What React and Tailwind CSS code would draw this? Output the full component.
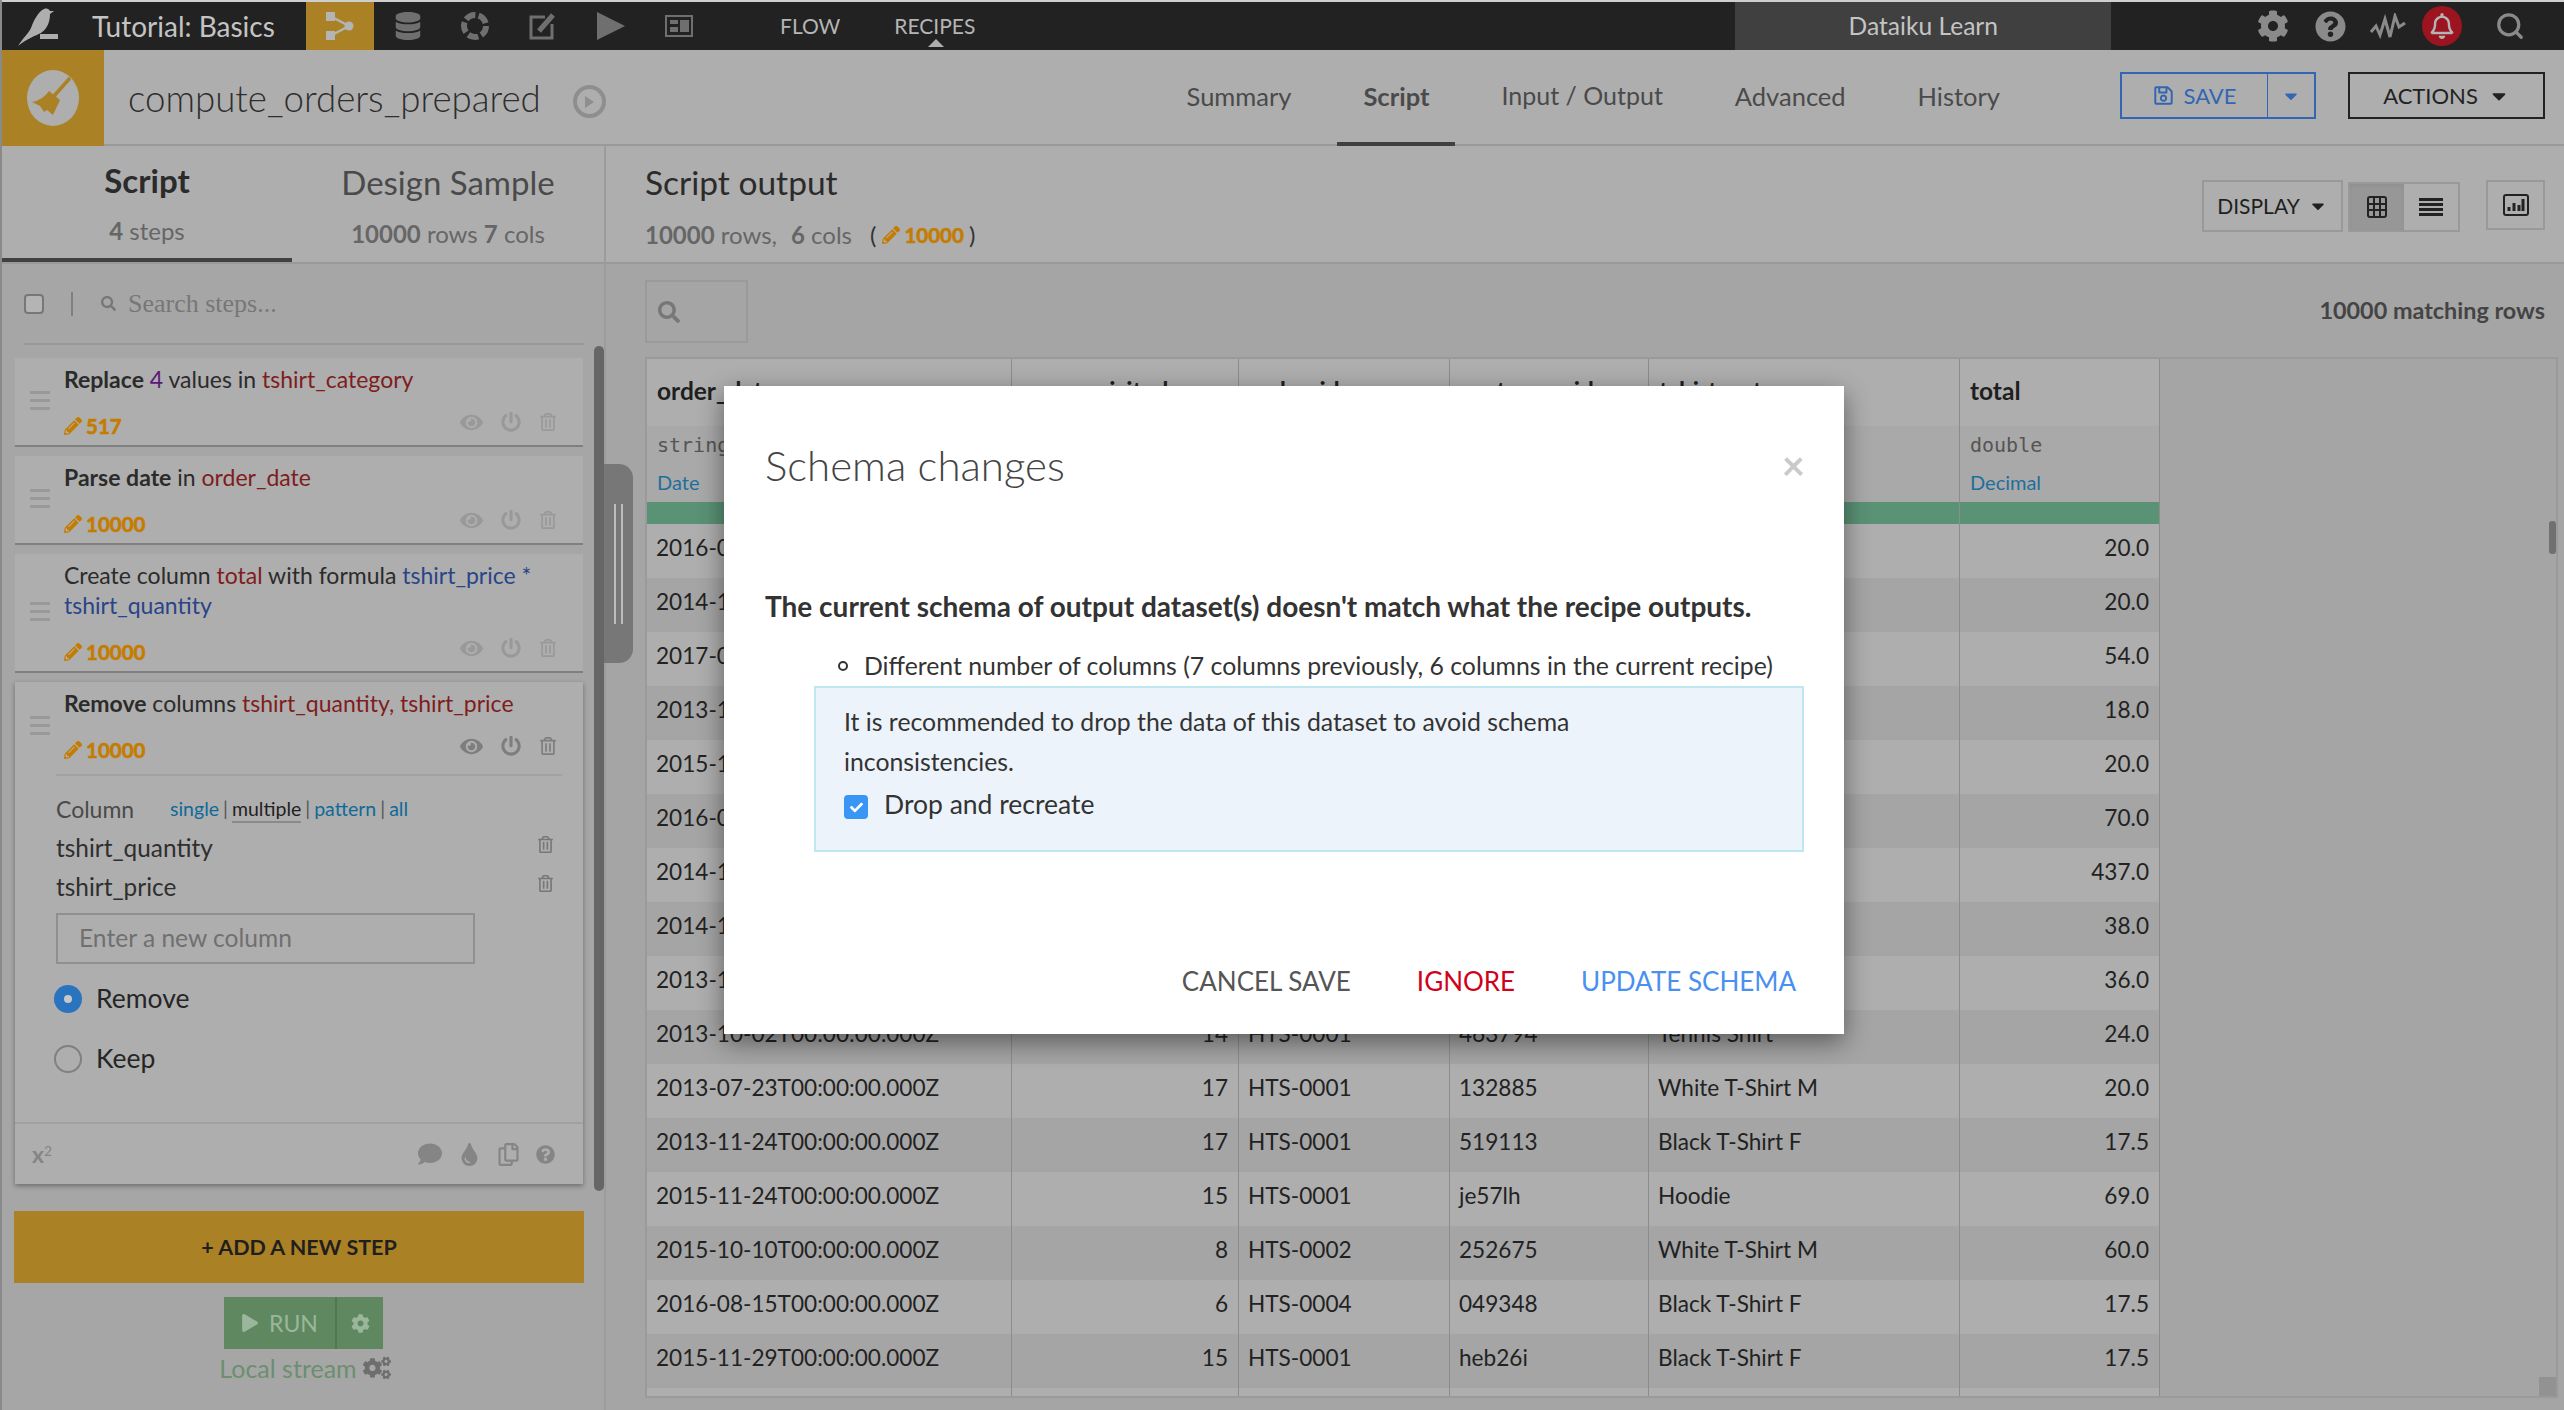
import React from "react";
import {
    FaCog, FaCogs, FaQuestionCircle, FaRegBell, FaSearch, FaEye, FaPowerOff, FaRegTrashAlt, FaPencilAlt,
    FaComment, FaTint, FaRegCopy, FaPlay, FaCaretDown, FaRegSave, FaDatabase, FaCheck,
} from "react-icons/fa";
import { Search } from "lucide-react";

const steps = [
    { id: 1, count: "517", lines: (<><b className="font-bold">Replace</b> <span className="text-[#5a1a78]">4</span> values in <span className="text-[#7f1d1d]">tshirt_category</span></>) },
    { id: 2, count: "10000", lines: (<><b className="font-bold">Parse date</b> in <span className="text-[#7f1d1d]">order_date</span></>) },
    { id: 3, count: "10000", lines: (<>Create column <span className="text-[#7f1d1d]">total</span> with formula <span className="text-[#2a4488]">tshirt_price</span> <span className="text-[#2a4488]">*</span><br /><span className="text-[#2a4488]">tshirt_quantity</span></>) },
];

const rows = [
    ["2016-03-12T00:00:00.000Z", 12, "HTS-0001", "382910", "White T-Shirt M", "20.0"],
    ["2014-11-02T00:00:00.000Z", 9, "HTS-0001", "720114", "Black T-Shirt M", "20.0"],
    ["2017-01-20T00:00:00.000Z", 4, "HTS-0003", "118273", "Wh Tee F", "54.0"],
    ["2013-12-01T00:00:00.000Z", 11, "HTS-0002", "440921", "Black T-Shirt F", "18.0"],
    ["2015-10-19T00:00:00.000Z", 7, "HTS-0001", "661204", "White T-Shirt M", "20.0"],
    ["2016-05-08T00:00:00.000Z", 3, "HTS-0001", "903348", "Hoodie", "70.0"],
    ["2014-10-27T00:00:00.000Z", 21, "HTS-0005", "257716", "Hoodie", "437.0"],
    ["2014-12-14T00:00:00.000Z", 6, "HTS-0002", "835190", "Tennis Shirt", "38.0"],
    ["2013-11-30T00:00:00.000Z", 10, "HTS-0002", "394025", "Black T-Shirt F", "36.0"],
    ["2013-10-02T00:00:00.000Z", 14, "HTS-0001", "463794", "Tennis Shirt", "24.0"],
    ["2013-07-23T00:00:00.000Z", 17, "HTS-0001", "132885", "White T-Shirt M", "20.0"],
    ["2013-11-24T00:00:00.000Z", 17, "HTS-0001", "519113", "Black T-Shirt F", "17.5"],
    ["2015-11-24T00:00:00.000Z", 15, "HTS-0001", "je57lh", "Hoodie", "69.0"],
    ["2015-10-10T00:00:00.000Z", 8, "HTS-0002", "252675", "White T-Shirt M", "60.0"],
    ["2016-08-15T00:00:00.000Z", 6, "HTS-0004", "049348", "Black T-Shirt F", "17.5"],
    ["2015-11-29T00:00:00.000Z", 15, "HTS-0001", "heb26i", "Black T-Shirt F", "17.5"],
];

const Bird = () => (
    <svg width="42" height="40" viewBox="0 0 42 40" fill="#aeaeae">
        <path d="M0 38 C5 30 10 26 13 20 C16 12 20 4 26 1 C29 0 31 1 32 3 L36 3 L32 6 C32 14 29 21 23 25 C17 28 10 30 0 38Z" />
        <rect x="22" y="26" width="18" height="5" />
    </svg>
);

const FlowIcon = () => (
    <svg width="30" height="30" viewBox="0 0 30 30" fill="#b4b4b4">
        <rect x="1" y="1" width="9" height="9" />
        <rect x="1" y="20" width="9" height="9" />
        <circle cx="24" cy="15" r="4.5" />
        <path d="M6 5.5 L24 15 L6 24.5" fill="none" stroke="#b4b4b4" strokeWidth="2.5" />
    </svg>
);

const RingIcon = () => (
    <svg width="30" height="30" viewBox="0 0 30 30" fill="none" stroke="#6f6f6f" strokeWidth="6">
        <circle cx="15" cy="15" r="11" strokeDasharray="10.5 3.3" />
    </svg>
);

const EditIcon = () => (
    <svg width="30" height="30" viewBox="0 0 30 30" fill="none" stroke="#6f6f6f" strokeWidth="3">
        <path d="M17 6 H3 V27 H24 V13" />
        <path d="M11 20 L25 4" strokeWidth="5" />
    </svg>
);

const PlayIcon = () => (
    <svg width="28" height="28" viewBox="0 0 28 28" fill="#6f6f6f"><path d="M0 0 L28 14 L0 28Z" /></svg>
);

const DashIcon = () => (
    <svg width="28" height="22" viewBox="0 0 28 22" fill="#6f6f6f">
        <path fillRule="evenodd" d="M0 0 H28 V22 H0Z M2 2 V20 H26 V2Z" />
        <rect x="5" y="5" width="8" height="4" />
        <rect x="5" y="12" width="8" height="5" />
        <rect x="15" y="5" width="9" height="12" />
    </svg>
);

const Broom = () => (
    <svg width="52" height="56" viewBox="0 0 52 56">
        <ellipse cx="26" cy="28" rx="26" ry="28" fill="#aeaeae" />
        <path d="M43 8 L27 26" stroke="#ab8125" strokeWidth="3.5" />
        <path d="M22 21 L33 30 L26 45 L20 40 L17 42 L13 36 L5 32 Q16 30 22 21Z" fill="#ab8125" />
    </svg>
);

const Activity = () => (
    <svg width="36" height="26" viewBox="0 0 36 26" fill="none" stroke="#8a8a8a" strokeWidth="3">
        <path d="M1 19 L6 13 L10 22 L15 6 L20 24 L25 3 L29 14 L35 10" />
    </svg>
);

const Handle = () => (
    <div className="flex flex-col gap-[5px] w-[20px]">
        <div className="h-[3px] bg-[#999999]" />
        <div className="h-[3px] bg-[#999999]" />
        <div className="h-[3px] bg-[#999999]" />
    </div>
);

const Count = ({ value }) => (
    <span className="flex items-center gap-[4px] text-[#c47c00] font-bold text-[20.5px] [-webkit-text-stroke:0.6px_#c47c00]">
        <FaPencilAlt className="text-[18px]" />
        {value}
    </span>
);

const StepTop = ({ step, active, children, height }) => (
    <div className={"flex " + height}>
        <div className="w-[49px] shrink-0 flex items-center justify-center pl-[1px] pb-[2px]">
            <Handle />
        </div>
        <div className="flex-1 pt-[6px] pr-[20px]">
            <div className="text-[23px] leading-[30px] text-[#2b2b2b] whitespace-nowrap">{children}</div>
            <div className="mt-[17px] h-[30px] flex items-center justify-between pr-[6px]">
                <Count value={step.count} />
                <div className={"flex items-center gap-[18px] mb-[8px] " + (active ? "text-[#7e7e7e]" : "text-[#999999]")}>
                    <FaEye className="text-[23px]" />
                    <FaPowerOff className="text-[20px]" />
                    <FaRegTrashAlt className="text-[18px]" />
                </div>
            </div>
        </div>
    </div>
);

const StepCard = ({ step, tall }) => (
    <div className="bg-[#aeaeae] border-b-2 border-[#808080]">
        <StepTop step={step} height={tall ? "h-[117px]" : "h-[87px]"}>{step.lines}</StepTop>
    </div>
);

const ModeLink = ({ children, active }) => (
    <span className={active ? "text-[#1f1f1f] border-b-2 border-[#8a8a8a] leading-[25px]" : "text-[#0f6a99]"}>{children}</span>
);

const Sidebar = () => (
    <aside className="w-[604px] shrink-0 border-r-2 border-[#9c9c9c] bg-[#a6a6a6] relative flex flex-col">
        <div className="h-[118px] bg-[#aeaeae] border-b-2 border-[#999999] flex shrink-0">
            <div className="w-[290px] border-b-[4px] border-[#404040] flex flex-col items-center pt-[16px]">
                <span className="text-[33px] leading-[36px] font-bold text-[#2b2b2b]">Script</span>
                <span className="text-[24px] mt-[16px] leading-[34px] text-[#666666]"><b>4</b> steps</span>
            </div>
            <div className="flex-1 flex flex-col items-center pt-[18px]">
                <span className="text-[33px] leading-[36px] text-[#4a4a4a]">Design Sample</span>
                <span className="text-[24px] mt-[17px] leading-[34px] text-[#666666]"><b>10000</b> rows <b>7</b> cols</span>
            </div>
        </div>
        <div className="h-[81px] ml-[22px] w-[560px] border-b-2 border-[#999999] flex items-center shrink-0">
            <span className="w-[20px] h-[20px] rounded-[4px] border-2 border-[#777777] bg-[#b4b4b4]" />
            <span className="w-[2px] h-[24px] bg-[#808080] ml-[27px]" />
            <FaSearch className="text-[15px] text-[#777777] ml-[28px]" />
            <span className="ml-[12px] text-[26px] text-[#777777] [font-family:'Liberation_Serif',serif]">Search steps...</span>
        </div>
        <div className="ml-[13px] w-[568px] mt-[13px] flex flex-col gap-[9px]">
            {steps.map((s) => <StepCard key={s.id} step={s} tall={s.id === 3} />)}
            <div className="bg-[#aeaeae] h-[502px] shadow-[0_2px_5px_rgba(0,0,0,0.35)] flex flex-col">
                <StepTop step={{ count: "10000" }} active height="h-[89px]">
                    <b className="font-bold">Remove</b> columns <span className="text-[#7f1d1d]">tshirt_quantity, tshirt_price</span>
                </StepTop>
                <div className="ml-[41px] w-[506px] border-t-2 border-[#a2a2a2] mt-[3px] flex-1 flex flex-col">
                    <div className="h-[40px] mt-[13px] flex items-center shrink-0">
                        <span className="w-[114px] text-[23px] text-[#4a4a4a]">Column</span>
                        <div className="flex items-center gap-[4px] text-[19.5px]">
                            <ModeLink>single</ModeLink><span className="text-[#555555]">|</span>
                            <ModeLink active>multiple</ModeLink><span className="text-[#555555]">|</span>
                            <ModeLink>pattern</ModeLink><span className="text-[#555555]">|</span>
                            <ModeLink>all</ModeLink>
                        </div>
                    </div>
                    {["tshirt_quantity", "tshirt_price"].map((c) => (
                        <div key={c} className="h-[39px] flex items-center justify-between text-[24.4px] text-[#2f2f2f] pr-[8px] shrink-0">
                            {c}
                            <FaRegTrashAlt className="text-[17px] text-[#777777] mb-[8px]" />
                        </div>
                    ))}
                    <div className="w-[419px] h-[51px] mt-[6px] border-2 border-[#909090] flex items-center pl-[21px] text-[24.6px] text-[#707070] shrink-0">Enter a new column</div>
                    <div className="h-[60px] mt-[5px] flex items-center -ml-[2px] shrink-0">
                        <span className="w-[28px] h-[28px] rounded-full bg-[#2a73bf] flex items-center justify-center">
                            <span className="w-[8px] h-[8px] rounded-full bg-[#c8c8c8]" />
                        </span>
                        <span className="ml-[14px] text-[26.5px] text-[#262626]">Remove</span>
                    </div>
                    <div className="h-[60px] flex items-center -ml-[2px] shrink-0">
                        <span className="w-[28px] h-[28px] rounded-full border-2 border-[#808080]" />
                        <span className="ml-[14px] text-[26.5px] text-[#262626]">Keep</span>
                    </div>
                </div>
                <div className="h-[62px] border-t-2 border-[#a0a0a0] flex items-center justify-between pl-[17px] pr-[28px] text-[#858585] shrink-0">
                    <span className="text-[23px] font-bold">x<sup className="text-[14px] font-normal">2</sup></span>
                    <div className="flex items-center gap-[16px]">
                        <FaComment className="text-[24px]" />
                        <FaTint className="text-[23px]" />
                        <FaRegCopy className="text-[23px]" />
                        <FaQuestionCircle className="text-[19px]" />
                    </div>
                </div>
            </div>
        </div>
        <div className="ml-[12px] w-[570px] h-[72px] mt-[27px] bg-[#ab8125] flex items-center justify-center text-[21.5px] font-bold text-[#1f1f1f] shrink-0">+ ADD A NEW STEP</div>
        <div className="mt-[14px] ml-[222px] w-[159px] h-[52px] flex bg-[#5f8860] text-[#9ab79b] shrink-0">
            <div className="w-[113px] border-r-2 border-[#4e7a50] flex items-center justify-center gap-[10px] text-[23px]">
                <FaPlay className="text-[18px]" />RUN
            </div>
            <div className="flex-1 flex items-center justify-center"><FaCog className="text-[19px]" /></div>
        </div>
        <div className="mt-[3px] flex justify-center items-center gap-[6px] pl-[4px] text-[25px] leading-[32px] text-[#6b8f6f]">
            Local stream <FaCogs className="text-[28px] text-[#6e6e6e]" />
        </div>

        <div className="absolute left-[592px] top-[200px] w-[10px] h-[845px] rounded-[5px] bg-[#666666]" />
        <div className="absolute left-[602px] top-[318px] w-[29px] h-[199px] rounded-r-[14px] bg-[#777777] flex justify-center gap-[5px] pt-[40px]">
            <span className="w-[2px] h-[120px] bg-[#bdbdbd]" />
            <span className="w-[2px] h-[120px] bg-[#bdbdbd]" />
        </div>
    </aside>
);

const colW = ["w-[365px]", "w-[227px]", "w-[211px]", "w-[199px]", "w-[311px]", "w-[200px]"];

const Table = () => {
    const heads = [
        ["order_date", "string", "Date"],
        ["pages_visited", "bigint", "Integer"],
        ["order_id", "string", "Text"],
        ["customer_id", "string", "Text"],
        ["tshirt_category", "string", "Text"],
        ["total", "double", "Decimal"],
    ];
    return (
        <div className="mt-[14px] w-[1913px] h-[1041px] border-2 border-[#9a9a9a] overflow-hidden relative">
            <div className="flex w-[1513px]">
                {heads.map((h, i) => (
                    <div key={h[0]} className={colW[i] + " border-r border-[#8c8c8c]"}>
                        <div className="h-[67px] bg-[#aeaeae] flex items-center pl-[10px] pb-[2px] text-[24.5px] font-bold text-[#1f1f1f]">{h[0]}</div>
                        <div className="h-[76px] bg-[#a9a9a9] pl-[10px] pt-[3px]">
                            <div className="text-[20px] leading-[32px] text-[#555555] [font-family:'DejaVu_Sans_Mono',monospace]">{h[1]}</div>
                            <div className="text-[20px] leading-[30px] mt-[6px] text-[#1f6f9c]">{h[2]}</div>
                        </div>
                        <div className="h-[22px] bg-[#5a9276]" />
                    </div>
                ))}
            </div>
            {rows.map((r, n) => (
                <div key={n} className={"flex w-[1513px] h-[54px] text-[22.6px] text-[#222222] " + (n % 2 === 0 ? "bg-[#aeaeae]" : "bg-[#a5a5a5]")}>
                    {r.map((v, i) => (
                        <div key={i} className={colW[i] + " border-r border-[#8c8c8c] flex items-center px-[10px] pl-[9px] pb-[7px] " + (i === 1 || i === 5 ? "justify-end" : "")}>{v}</div>
                    ))}
                </div>
            ))}
            <div className="flex w-[1513px] h-[14px] bg-[#aeaeae]">
                {colW.map((c) => <div key={c} className={c + " border-r border-[#8c8c8c]"} />)}
            </div>
            <div className="absolute right-0 top-[162px] w-[7px] h-[33px] bg-[#707070] rounded-[3px]" />
            <div className="absolute right-[0px] bottom-0 w-[17px] h-[19px] bg-[#929292]" />
        </div>
    );
};

const Main = () => (
    <main className="flex-1 bg-[#a5a5a5] flex flex-col min-w-0">
        <div className="h-[118px] bg-[#aeaeae] border-b-2 border-[#999999] flex justify-between pl-[39px] pr-[19px] shrink-0">
            <div className="pt-[18px]">
                <div className="text-[33.5px] leading-[36px] text-[#2b2b2b]">Script output</div>
                <div className="mt-[20px] text-[24px] leading-[30px] text-[#666666] flex items-center">
                    <span><b>10000</b> rows,</span>
                    <span className="ml-[14px]"><b>6</b> cols</span>
                    <span className="ml-[18px] mr-[6px] text-[#333333]">(</span>
                    <Count value="10000" />
                    <span className="ml-[5px] text-[#333333]">)</span>
                </div>
            </div>
            <div className="flex items-start pt-[34px]">
                <div className="w-[141px] h-[52px] border-2 border-[#999999] flex items-center justify-center gap-[8px] text-[21px] text-[#1f1f1f]">
                    DISPLAY <FaCaretDown className="text-[20px]" />
                </div>
                <div className="ml-[5px] flex h-[50px] mt-[2px] border-2 border-[#999999]">
                    <div className="w-[54px] bg-[#979797] flex items-center justify-center shadow-inner">
                        <svg width="20" height="24" viewBox="0 0 20 24" fill="none" stroke="#222222" strokeWidth="2">
                            <rect x="1" y="2" width="18" height="20" rx="2" />
                            <path d="M1 9H19M1 15H19M7 2V22M13 2V22" />
                        </svg>
                    </div>
                    <div className="w-[54px] flex items-center justify-center">
                        <svg width="24" height="20" viewBox="0 0 24 20" fill="#222222">
                            <rect x="0" y="1" width="24" height="3" /><rect x="0" y="6" width="24" height="3" />
                            <rect x="0" y="11" width="24" height="3" /><rect x="0" y="16" width="24" height="3" />
                        </svg>
                    </div>
                </div>
                <div className="ml-[26px] w-[59px] h-[50px] border-2 border-[#999999] flex items-center justify-center">
                    <svg width="26" height="22" viewBox="0 0 26 22" fill="none" stroke="#222222" strokeWidth="2">
                        <rect x="1" y="1" width="24" height="20" rx="2" />
                        <path d="M6 17V13M11 17V9M16 17V11M20 17V5" strokeWidth="3" />
                    </svg>
                </div>
            </div>
        </div>
        <div className="pl-[39px] pr-[19px] pt-[16px] flex justify-between items-center">
            <div className="w-[103px] h-[63px] border-2 border-[#9a9a9a] flex items-center pl-[11px]">
                <FaSearch className="text-[22px] text-[#777777]" />
            </div>
            <span className="text-[23.4px] font-bold text-[#444444] mb-[2px]">10000 matching rows</span>
        </div>
        <div className="pl-[39px]"><Table /></div>
    </main>
);

const Modal = () => (
    <div className="absolute left-[722px] top-[386px] w-[1120px] h-[648px] bg-white shadow-[0_8px_24px_rgba(0,0,0,0.45)] flex flex-col pl-[41px] pr-[40px]">
        <div className="flex items-center justify-between h-[60px] mt-[49px] shrink-0">
            <span className="text-[42px] font-light text-[#444444]">Schema changes</span>
            <span className="text-[40px] font-bold text-[#c9c9c9] -mr-[1px]">×</span>
        </div>
        <div className="mt-[91px] text-[28px] leading-[40px] font-bold text-[#333333] shrink-0">The current schema of output dataset(s) doesn't match what the recipe outputs.</div>
        <div className="mt-[19px] h-[41px] flex items-center text-[24.8px] text-[#333333] pl-[73px] shrink-0">
            <span className="w-[10px] h-[10px] rounded-full border-2 border-[#333333] mr-[16px]" />
            Different number of columns (7 columns previously, 6 columns in the current recipe)
        </div>
        <div className="ml-[49px] h-[166px] bg-[#edf3fa] border-2 border-[#bfe7ef] pl-[28px] pt-[14px] text-[24.8px] text-[#333333] leading-[40px] shrink-0">
            <div className="w-[800px]">It is recommended to drop the data of this dataset to avoid schema inconsistencies.</div>
            <div className="flex items-center h-[44px] text-[26.5px]">
                <span className="w-[24px] h-[24px] rounded-[4px] bg-[#3a96f5] flex items-center justify-center mr-[16px] mt-[6px]">
                    <FaCheck className="text-[13px] text-white" />
                </span>
                Drop and recreate
            </div>
        </div>
        <div className="mt-[110px] flex justify-end items-center gap-[66px] pr-[8px] text-[26px]">
            <span className="text-[#555555]">CANCEL SAVE</span>
            <span className="text-[#d0021b]">IGNORE</span>
            <span className="text-[#4a90f0]">UPDATE SCHEMA</span>
        </div>
    </div>
);

const App = () => (
    <div className="relative w-[2564px] h-[1410px] overflow-hidden bg-[#aeaeae] border-l-2 border-[#8a8a8a] [font-family:Lato,'Noto_Sans',sans-serif]">
        <div className="h-[2px] bg-[#cfcfcf]" />
        <div className="h-[48px] bg-[#222222] flex items-center text-[#b5b5b5]">
            <div className="w-[90px] pl-[16px] pt-[4px]"><Bird /></div>
            <span className="w-[214px] text-[28px] text-[#c4c4c4]">Tutorial: Basics</span>
            <div className="w-[68px] h-full bg-[#ab8125] flex items-center justify-center"><FlowIcon /></div>
            <div className="w-[67px] flex justify-center"><FaDatabase className="text-[28px] text-[#6f6f6f]" /></div>
            <div className="w-[68px] flex justify-center"><RingIcon /></div>
            <div className="w-[67px] flex justify-center"><EditIcon /></div>
            <div className="w-[70px] flex justify-center"><PlayIcon /></div>
            <div className="w-[66px] flex justify-center"><DashIcon /></div>
            <span className="ml-[68px] text-[21px]">FLOW</span>
            <span className="ml-[54px] text-[21px] relative">
                RECIPES
                <span className="absolute left-[34px] top-[29px] w-0 h-0 border-x-[8px] border-x-transparent border-b-[8px] border-b-[#aeaeae]" />
            </span>
            <div className="ml-[760px] w-[376px] h-full bg-[#404040] flex items-center justify-center text-[24.6px] text-[#c4c4c4]">Dataiku Learn</div>
            <div className="flex items-center text-[#8a8a8a]">
                <FaCog className="ml-[146px] text-[32px]" />
                <FaQuestionCircle className="ml-[26px] text-[31px]" />
                <span className="ml-[24px] flex"><Activity /></span>
                <span className="ml-[16px] w-[40px] h-[40px] rounded-full bg-[#9b1420] flex items-center justify-center"><FaRegBell className="text-[26px] text-[#b4b4b4]" /></span>
                <Search size={30} strokeWidth={2.6} className="ml-[33px]" />
            </div>
        </div>
        <div className="h-[96px] border-b-2 border-[#999999] flex">
            <div className="w-[102px] h-[96px] bg-[#ab8125] flex items-center justify-center shrink-0"><Broom /></div>
            <span className="ml-[24px] mt-[26px] text-[36.7px] leading-[44px] font-light text-[#2e2e2e]">compute_orders_prepared</span>
            <span className="ml-[32px] mt-[35px] w-[33px] h-[33px] rounded-full border-[4px] border-[#8e8e8e] flex items-center justify-center">
                <span className="w-0 h-0 border-y-[6px] border-y-transparent border-l-[9px] border-l-[#8e8e8e]" />
            </span>
            <nav className="ml-auto flex gap-[20px] h-full text-[25.5px] text-[#4a4a4a]">
                <span className="px-[26px] h-[96px] flex items-center pb-[4px]">Summary</span>
                <span className="px-[26px] h-[96px] flex items-center font-bold border-b-[4px] border-[#404040]">Script</span>
                <span className="px-[26px] h-[96px] flex items-center pb-[4px] text-[25px]">Input / Output</span>
                <span className="px-[26px] h-[96px] flex items-center pb-[4px]">Advanced</span>
                <span className="px-[26px] h-[96px] flex items-center pb-[4px]">History</span>
            </nav>
            <div className="ml-[94px] mt-[22px] flex w-[196px] h-[47px] border-2 border-[#3266b3] text-[#3266b3] text-[22px]">
                <div className="w-[146px] border-r border-[#3266b3] flex items-center justify-center gap-[10px]"><FaRegSave className="text-[21px]" />SAVE</div>
                <div className="flex-1 flex items-center justify-center"><FaCaretDown className="text-[20px]" /></div>
            </div>
            <div className="ml-[32px] mr-[19px] mt-[22px] w-[197px] h-[47px] border-2 border-[#222222] flex items-center justify-center gap-[10px] text-[22px] text-[#222222]">
                ACTIONS <FaCaretDown className="text-[22px]" />
            </div>
        </div>
        <div className="flex h-[1264px]">
            <Sidebar />
            <Main />
        </div>
        <Modal />
    </div>
);

export default App;
